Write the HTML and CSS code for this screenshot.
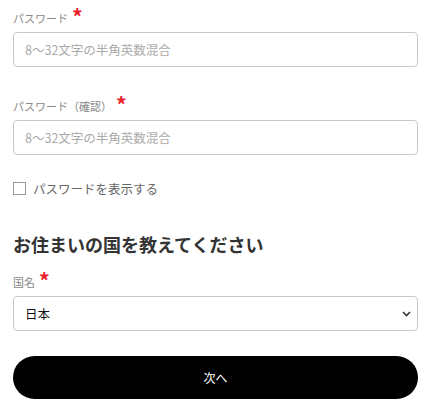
FILE: index.html
```html
<!DOCTYPE html>
<html lang="ja">
<head>
    <meta charset="UTF-8">
    <meta name="viewport" content="width=device-width, initial-scale=1.0">
    <title>会員登録</title>
    <link rel="stylesheet" href="styles.css">
</head>
<body>
    <form class="signup">
        <div class="field">
            <label class="label" for="pw">パスワード<span class="req">*</span></label>
            <input class="input" type="password" id="pw" placeholder="8～32文字の半角英数混合">
        </div>

        <div class="field">
            <label class="label" for="pw2">パスワード（確認）<span class="req">*</span></label>
            <input class="input" type="password" id="pw2" placeholder="8～32文字の半角英数混合">
        </div>

        <label class="show-pw">
            <input type="checkbox" class="check">
            <span>パスワードを表示する</span>
        </label>

        <h2 class="section-title">お住まいの国を教えてください</h2>

        <div class="field">
            <label class="label" for="country">国名<span class="req">*</span></label>
            <div class="select-wrap">
                <select class="input select" id="country">
                    <option>日本</option>
                </select>
                <svg class="chevron" width="9" height="6" viewBox="0 0 9 6">
                    <path d="M1 1 L4.5 4.5 L8 1" fill="none" stroke="#333" stroke-width="1.6"/>
                </svg>
            </div>
        </div>

        <button type="submit" class="next">次へ</button>
    </form>
</body>
</html>
```

FILE: styles.css
```css
body {
    margin: 0;
    font-family: "Noto Sans CJK JP", "Noto Sans", sans-serif;
    color: #333;
    background: #fff;
}
.signup {
    padding: 6px 17px 0 13px;
}
.field {
    margin-bottom: 27px;
}
.label {
    display: block;
    font-size: 11px;
    line-height: 20px;
    height: 20px;
    color: #888;
    margin-bottom: 6px;
}
.req {
    color: #e8202a;
    font-size: 21px;
    font-weight: bold;
    line-height: 1;
    vertical-align: -2px;
    margin-left: 4px;
}
.input {
    display: block;
    width: 100%;
    height: 35px;
    box-sizing: border-box;
    border: 1px solid #c8c8c8;
    border-radius: 4px;
    padding: 0 11px;
    font-family: inherit;
    font-size: 12.5px;
    color: #111;
    background: #fff;
}
.input::placeholder {
    color: #aaa;
}
.show-pw {
    display: flex;
    align-items: center;
    height: 20px;
    margin-top: -4px;
    font-size: 12.5px;
    color: #666;
}
.check {
    appearance: none;
    width: 13px;
    height: 13px;
    margin: 0 7px 0 0;
    border: 1px solid #999;
    background: #fff;
}
.section-title {
    font-size: 18px;
    line-height: 24px;
    font-weight: bold;
    color: #333;
    margin: 34px 0 14px;
}
.select-wrap {
    position: relative;
}
.select {
    appearance: none;
}
.chevron {
    position: absolute;
    right: 7px;
    top: 15px;
}
.next {
    display: block;
    width: 100%;
    height: 43px;
    margin-top: -2px;
    border: none;
    border-radius: 22px;
    background: #000;
    color: #fff;
    font-family: inherit;
    font-size: 12px;
}
```
